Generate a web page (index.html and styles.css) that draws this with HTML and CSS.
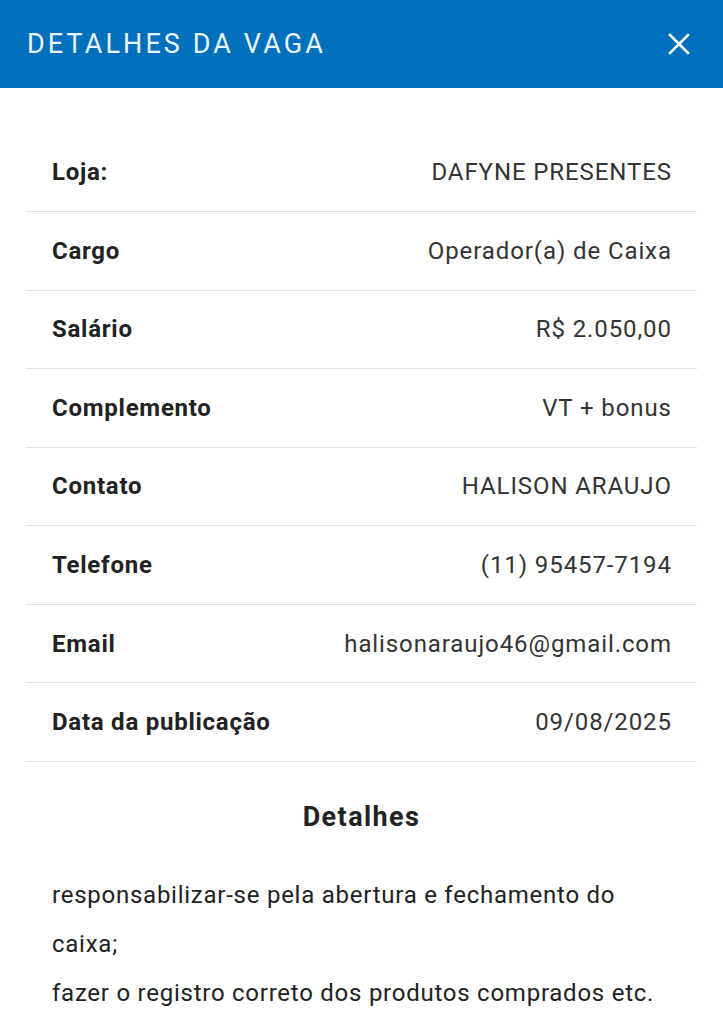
FILE: index.html
```html
<!DOCTYPE html>
<html lang="pt-BR">
<head>
<meta charset="utf-8">
<title>Detalhes da vaga</title>
<link rel="stylesheet" href="styles.css">
</head>
<body>
<header class="topbar">
  <h1 class="topbar-title">DETALHES DA VAGA</h1>
  <button class="close-btn" aria-label="Fechar">
    <svg width="22" height="22" viewBox="0 0 22 22"><path d="M2 2 L20 20 M20 2 L2 20" stroke="#fff" stroke-width="2.5" stroke-linecap="square" fill="none"/></svg>
  </button>
</header>
<main class="content">
  <ul class="info-list">
    <li class="info-row"><span class="info-label">Loja:</span><span class="info-value">DAFYNE PRESENTES</span></li>
    <li class="info-row"><span class="info-label">Cargo</span><span class="info-value">Operador(a) de Caixa</span></li>
    <li class="info-row"><span class="info-label">Salário</span><span class="info-value">R$ 2.050,00</span></li>
    <li class="info-row"><span class="info-label">Complemento</span><span class="info-value">VT + bonus</span></li>
    <li class="info-row"><span class="info-label">Contato</span><span class="info-value">HALISON ARAUJO</span></li>
    <li class="info-row"><span class="info-label">Telefone</span><span class="info-value">(11) 95457-7194</span></li>
    <li class="info-row"><span class="info-label">Email</span><span class="info-value">halisonaraujo46@gmail.com</span></li>
    <li class="info-row"><span class="info-label">Data da publicação</span><span class="info-value">09/08/2025</span></li>
  </ul>
  <h2 class="details-title">Detalhes</h2>
  <p class="details-text">responsabilizar-se pela abertura e fechamento do caixa;<br>fazer o registro correto dos produtos comprados etc.</p>
</main>
</body>
</html>
```
FILE: styles.css
```css
* { box-sizing: border-box; }
html, body {
  margin: 0;
  padding: 0;
  background: #fff;
  font-family: Roboto, "Noto Sans", Arial, sans-serif;
}
.topbar {
  height: 88px;
  background: #0070bc;
  display: flex;
  align-items: center;
  justify-content: space-between;
  padding: 0 33px 0 27px;
}
.topbar-title {
  margin: 0;
  font-size: 27px;
  font-weight: 400;
  color: #eaf5ff;
  letter-spacing: 3.1px;
}
.close-btn {
  background: none;
  border: 0;
  padding: 0;
  width: 22px;
  height: 22px;
  display: flex;
}
.content {
  padding: 45.4px 26px 0 26px;
}
.info-list {
  list-style: none;
  margin: 0;
  padding: 0;
}
.info-row {
  height: 78.57px;
  display: flex;
  align-items: center;
  justify-content: space-between;
  padding: 0 26px;
  border-bottom: 1px solid #e2e2e2;
  font-size: 24px;
  letter-spacing: 0.9px;
}
.info-label {
  font-weight: 700;
  color: #222;
  letter-spacing: 0.75px;
}
.info-value {
  color: #333;
  margin-right: -0.9px;
}
.details-title {
  margin: 39px 0 0 0;
  text-align: center;
  font-size: 27px;
  font-weight: 700;
  color: #222;
  letter-spacing: 1.4px;
  line-height: normal;
}
.details-text {
  margin: 38px 0 0 0;
  padding: 0 26px;
  font-size: 24px;
  line-height: 49px;
  letter-spacing: 0.75px;
  color: #222;
}
```
